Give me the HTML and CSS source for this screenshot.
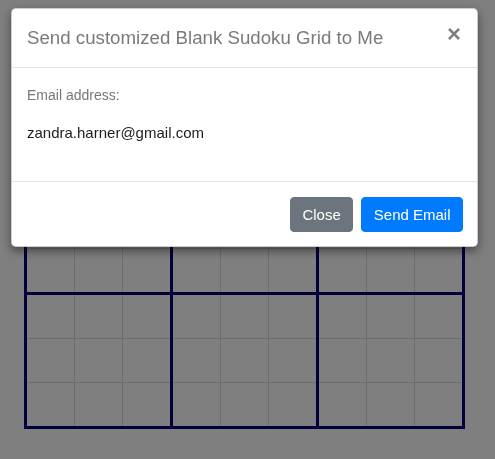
FILE: index.html
```html
<!DOCTYPE html>
<html lang="en">
<head>
<meta charset="utf-8">
<title>Blank Sudoku Grid</title>
<link rel="stylesheet" href="styles.css">
</head>
<body>
<div class="page">
  <div class="sudoku">
    <div class="block"><div class="cell"></div><div class="cell"></div><div class="cell"></div><div class="cell"></div><div class="cell"></div><div class="cell"></div><div class="cell"></div><div class="cell"></div><div class="cell"></div></div>
    <div class="block"><div class="cell"></div><div class="cell"></div><div class="cell"></div><div class="cell"></div><div class="cell"></div><div class="cell"></div><div class="cell"></div><div class="cell"></div><div class="cell"></div></div>
    <div class="block"><div class="cell"></div><div class="cell"></div><div class="cell"></div><div class="cell"></div><div class="cell"></div><div class="cell"></div><div class="cell"></div><div class="cell"></div><div class="cell"></div></div>
    <div class="block"><div class="cell"></div><div class="cell"></div><div class="cell"></div><div class="cell"></div><div class="cell"></div><div class="cell"></div><div class="cell"></div><div class="cell"></div><div class="cell"></div></div>
    <div class="block"><div class="cell"></div><div class="cell"></div><div class="cell"></div><div class="cell"></div><div class="cell"></div><div class="cell"></div><div class="cell"></div><div class="cell"></div><div class="cell"></div></div>
    <div class="block"><div class="cell"></div><div class="cell"></div><div class="cell"></div><div class="cell"></div><div class="cell"></div><div class="cell"></div><div class="cell"></div><div class="cell"></div><div class="cell"></div></div>
    <div class="block"><div class="cell"></div><div class="cell"></div><div class="cell"></div><div class="cell"></div><div class="cell"></div><div class="cell"></div><div class="cell"></div><div class="cell"></div><div class="cell"></div></div>
    <div class="block"><div class="cell"></div><div class="cell"></div><div class="cell"></div><div class="cell"></div><div class="cell"></div><div class="cell"></div><div class="cell"></div><div class="cell"></div><div class="cell"></div></div>
    <div class="block"><div class="cell"></div><div class="cell"></div><div class="cell"></div><div class="cell"></div><div class="cell"></div><div class="cell"></div><div class="cell"></div><div class="cell"></div><div class="cell"></div></div>
  </div>
</div>

<div class="backdrop"></div>

<div class="modal">
  <div class="modal-header">
    <h5 class="modal-title">Send customized Blank Sudoku Grid to Me</h5>
    <button class="close" type="button">&times;</button>
  </div>
  <div class="modal-body">
    <label class="field-label">Email address:</label>
    <p class="email">zandra.harner@gmail.com</p>
  </div>
  <div class="modal-footer">
    <button class="btn btn-secondary" type="button">Close</button>
    <button class="btn btn-primary" type="button">Send Email</button>
  </div>
</div>
</body>
</html>
```

FILE: styles.css
```css
* { box-sizing: border-box; }

html, body {
  margin: 0;
  padding: 0;
  background: #fff;
  font-family: "Liberation Sans", Arial, sans-serif;
  color: #212529;
}

.page {
  padding: 24px;
}

.sudoku {
  display: grid;
  grid-template-columns: repeat(3, 143px);
  grid-template-rows: repeat(3, 131px);
  gap: 3px;
  padding: 3px;
  background: #000078;
  width: max-content;
}

.block {
  display: grid;
  grid-template-columns: repeat(3, 47px);
  grid-template-rows: repeat(3, 43px);
  gap: 1px;
  background: #d8d8ee;
}

.cell {
  background: #fff;
}

.backdrop {
  position: fixed;
  inset: 0;
  background: rgba(0, 0, 0, 0.5);
}

.modal {
  position: absolute;
  top: 8px;
  left: 11px;
  width: 467px;
  background: #fff;
  border: 1px solid rgba(0, 0, 0, 0.2);
  border-radius: 5px;
  box-shadow: 0 4px 10px rgba(0, 0, 0, 0.45);
  display: flex;
  flex-direction: column;
}

.modal-header {
  display: flex;
  align-items: flex-start;
  justify-content: space-between;
  padding: 15px;
  border-bottom: 1px solid #e2e2e2;
}

.modal-title {
  margin: 0;
  font-size: 18.7px;
  line-height: 28px;
  font-weight: 400;
  color: #7a7a7a;
}

.close {
  border: 0;
  background: transparent;
  padding: 0;
  margin: -2px 1px 0 0;
  font-family: "Liberation Sans", Arial, sans-serif;
  font-size: 24px;
  line-height: 24px;
  font-weight: 700;
  color: #000;
  opacity: 0.5;
  text-shadow: 0 1px 0 #fff;
}

.modal-body {
  padding: 17px 15px 15px;
  display: flex;
  flex-direction: column;
}

.field-label {
  font-size: 14px;
  line-height: 20px;
  color: #777;
}

.email {
  margin: 17px 0 22px;
  font-size: 15px;
  line-height: 22px;
  color: #1d1d1d;
}

.modal-footer {
  display: flex;
  justify-content: flex-end;
  align-items: center;
  padding: 15px 14px 14px 15px;
  border-top: 1px solid #e2e2e2;
}

.btn {
  font-family: "Liberation Sans", Arial, sans-serif;
  font-size: 15px;
  line-height: 21px;
  padding: 6px 11.5px;
  border: 1px solid transparent;
  border-radius: 4px;
  color: #fff;
}

.btn + .btn {
  margin-left: 8px;
}

.btn-secondary {
  background: #6c757d;
  border-color: #6c757d;
}

.btn-primary {
  background: #007bff;
  border-color: #007bff;
}
```
